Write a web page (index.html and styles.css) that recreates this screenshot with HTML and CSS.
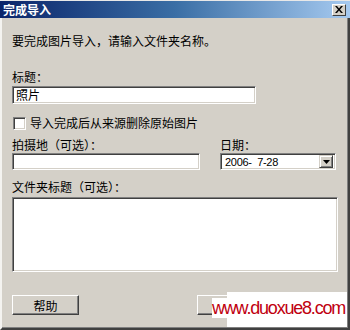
FILE: index.html
```html
<!DOCTYPE html>
<html>
<head>
<meta charset="utf-8">
<link rel="stylesheet" href="styles.css">
</head>
<body>
<div class="window">
  <div class="titlebar">
    <span class="title">完成导入</span>
    <span class="close">
      <svg width="8" height="7" viewBox="0 0 8 7"><path d="M0 0h2l2 2.5L6 0h2L5 3.5 8 7H6L4 4.5 2 7H0l3-3.5z" fill="#000"/></svg>
    </span>
  </div>
  <div class="frame">
    <div class="line">要完成图片导入，请输入文件夹名称。</div>
    <div class="line lbl-title">标题：</div>
    <div class="field field-title">照片</div>
    <div class="check-row">
      <span class="checkbox"></span>
      <span class="line">导入完成后从来源删除原始图片</span>
    </div>
    <div class="pair">
      <div class="col col-place">
        <div class="line">拍摄地（可选）：</div>
        <div class="field field-small"></div>
      </div>
      <div class="col col-date">
        <div class="line">日期：</div>
        <div class="field field-small select">
          <span class="sel-text">2006-&nbsp;&nbsp;7-28</span>
          <span class="drop"><svg width="7" height="4" viewBox="0 0 7 4"><path d="M0 0h7L3.5 4z" fill="#000"/></svg></span>
        </div>
      </div>
    </div>
    <div class="line lbl-folder">文件夹标题（可选）：</div>
    <div class="field textarea"></div>
    <div class="buttons">
      <button class="btn">帮助</button>
      <button class="btn btn-ok"></button>
    </div>
  </div>
  <div class="watermark">
    <div class="wm-back"></div>
    <div class="wm-front">www.duoxue8.com</div>
  </div>
</div>
</body>
</html>
```
FILE: styles.css
```css
html, body {
  margin: 0;
  padding: 0;
}
body {
  width: 350px;
  height: 330px;
  background: #d4d0c8;
  font-family: "Noto Sans CJK SC", "Liberation Sans", sans-serif;
  font-size: 12px;
  color: #000;
  overflow: hidden;
}
.window {
  position: relative;
  width: 350px;
  height: 330px;
  display: flex;
  flex-direction: column;
}
.titlebar {
  height: 18px;
  display: flex;
  align-items: center;
  justify-content: space-between;
  padding: 0 4px 0 3px;
  background: linear-gradient(to right, #0a246a, #3a6ea5 50%, #a6caf0);
  border-top: 1px solid #e8e8e8;
  box-sizing: border-box;
}
.title {
  color: #fff;
  font-weight: bold;
  font-size: 12px;
  line-height: 14px;
}
.close {
  width: 14px;
  height: 12px;
  box-sizing: border-box;
  background: #d4d0c8;
  border: 1px solid;
  border-color: #fff #404040 #404040 #fff;
  display: flex;
  align-items: center;
  justify-content: center;
}
.frame {
  flex: 1;
  box-sizing: border-box;
  border-left: 2px solid #f4f3f0;
  border-right: 2px solid #404040;
  border-bottom: 2px solid #404040;
  box-shadow: inset -1px -1px #808080;
  padding: 16px 0 0 10px;
  display: flex;
  flex-direction: column;
  align-items: flex-start;
}
.line {
  line-height: 14px;
  height: 14px;
  white-space: nowrap;
}
.lbl-title {
  margin-top: 22px;
}
.field {
  box-sizing: border-box;
  background: #fff;
  border: 1px solid;
  border-color: #808080 #fff #fff #808080;
  box-shadow: inset 1px 1px #404040, inset -1px -1px #d4d0c8;
}
.field-title {
  margin-top: 2px;
  width: 244px;
  height: 18px;
  line-height: 16px;
  padding-left: 3px;
}
.check-row {
  margin-top: 12px;
  display: flex;
  align-items: center;
  gap: 4px;
  margin-left: 1px;
}
.checkbox {
  width: 13px;
  height: 13px;
  box-sizing: border-box;
  background: #fff;
  border: 1px solid;
  border-color: #808080 #fff #fff #808080;
  box-shadow: inset 1px 1px #404040, inset -1px -1px #d4d0c8;
}
.pair {
  margin-top: 8px;
  display: flex;
  gap: 20px;
}
.col {
  display: flex;
  flex-direction: column;
}
.col-place {
  width: 188px;
}
.col-date {
  width: 116px;
}
.field-small {
  margin-top: 1px;
  height: 17px;
}
.select {
  display: flex;
  align-items: center;
  justify-content: space-between;
  padding: 0 2px 0 4px;
}
.sel-text {
  font-family: "Liberation Sans", sans-serif;
  font-size: 11px;
  letter-spacing: -0.3px;
}
.drop {
  width: 14px;
  height: 13px;
  box-sizing: border-box;
  background: #d4d0c8;
  border: 1px solid;
  border-color: #d4d0c8 #404040 #404040 #d4d0c8;
  box-shadow: inset 1px 1px #fff, inset -1px -1px #808080;
  display: flex;
  align-items: center;
  justify-content: center;
}
.lbl-folder {
  margin-top: 10px;
}
.textarea {
  margin-top: 3px;
  width: 326px;
  height: 75px;
}
.buttons {
  margin-top: 23px;
  width: 326px;
  display: flex;
  gap: 118px;
}
.btn {
  width: 67px;
  height: 20px;
  margin: 0;
  padding: 0;
  font-family: "Noto Sans CJK SC", sans-serif;
  font-size: 12px;
  color: #000;
  background: #d4d0c8;
  border: 1px solid;
  border-color: #fff #404040 #404040 #fff;
  box-shadow: inset -1px -1px #808080;
}
.watermark {
  position: absolute;
  left: 212px;
  top: 292px;
  width: 135px;
  height: 35px;
}
.wm-back {
  position: absolute;
  left: 15px;
  top: 0;
  width: 120px;
  height: 35px;
  background: #fff;
}
.wm-front {
  position: absolute;
  left: 0;
  top: 6px;
  width: 135px;
  height: 20px;
  background: #fff;
  color: #c00010;
  font-family: "Liberation Sans", sans-serif;
  font-size: 18px;
  line-height: 20px;
  letter-spacing: -1.2px;
  white-space: nowrap;
}
```
